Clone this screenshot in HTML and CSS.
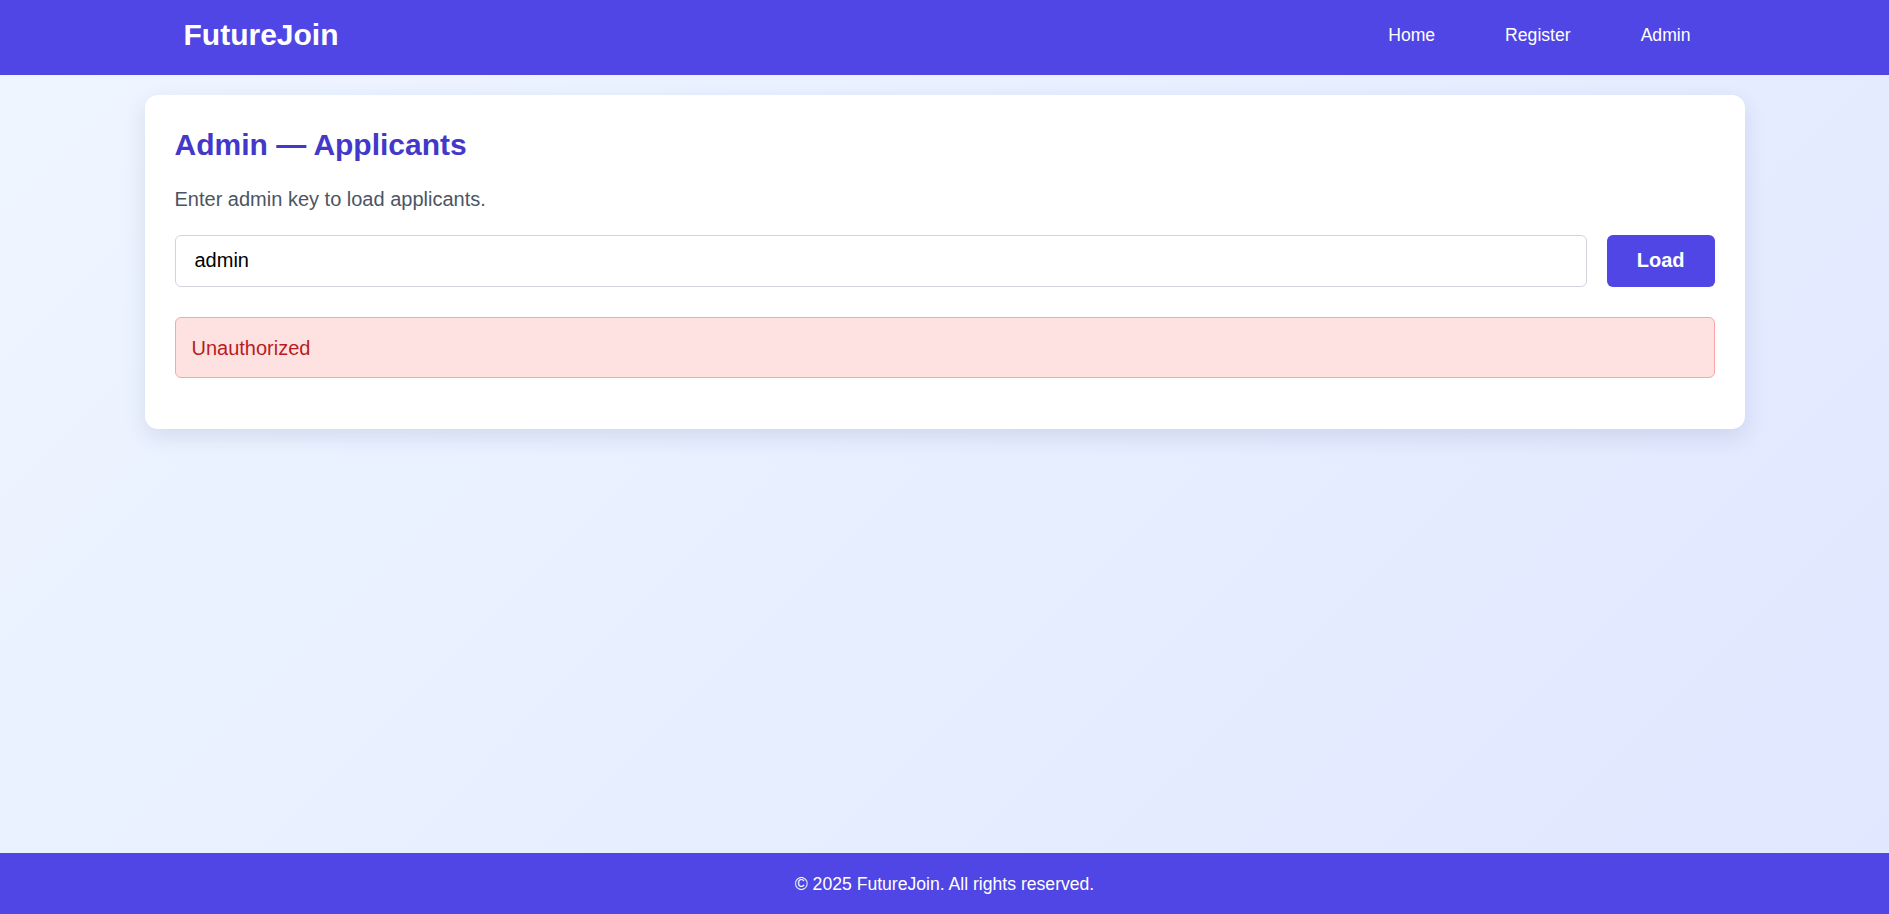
FILE: index.html
```html
<!DOCTYPE html>
<html lang="en">
<head>
<meta charset="utf-8">
<title>FutureJoin — Admin</title>
<link rel="stylesheet" href="styles.css">
</head>
<body>
<header class="site-header">
  <div class="header-inner">
    <div class="logo">FutureJoin</div>
    <nav class="nav">
      <a class="nav-link" href="#">Home</a>
      <a class="nav-link" href="#">Register</a>
      <a class="nav-link" href="#">Admin</a>
    </nav>
  </div>
</header>
<main class="main">
  <section class="card">
    <h2 class="card-title">Admin — Applicants</h2>
    <p class="card-sub">Enter admin key to load applicants.</p>
    <div class="key-row">
      <input class="key-input" type="text" value="admin">
      <button class="load-btn" type="button">Load</button>
    </div>
    <div class="error-box">Unauthorized</div>
  </section>
</main>
<footer class="site-footer">© 2025 FutureJoin. All rights reserved.</footer>
</body>
</html>
```
FILE: styles.css
```css
* { box-sizing: border-box; }
html, body { height: 100%; }
body {
  margin: 0;
  min-height: 100vh;
  display: flex;
  flex-direction: column;
  font-family: "Liberation Sans", Arial, sans-serif;
  background: linear-gradient(135deg, #eff6ff 0%, #e0e7ff 100%);
  color: #111827;
}
.site-header {
  background: #4f46e5;
  color: #fff;
  height: 75px;
  padding-top: 18px;
}
.header-inner {
  max-width: 1600px;
  margin: 0 auto;
  padding: 0 40px 0 39px;
  display: flex;
  align-items: center;
  justify-content: space-between;
  height: 34px;
}
.logo {
  font-size: 30px;
  font-weight: 700;
  line-height: 34px;
}
.nav {
  display: flex;
  gap: 42px;
}
.nav-link {
  color: #fff;
  text-decoration: none;
  font-size: 17.6px;
  padding: 0 14px;
}
.main {
  flex: 1;
  width: 100%;
  max-width: 1600px;
  margin: 20px auto 0;
}
.card {
  background: #fff;
  border-radius: 13px;
  padding: 33px 30px 32px;
  box-shadow: 0 8px 22px rgba(40, 50, 110, 0.12);
}
.card-title {
  margin: 0 0 26px;
  font-size: 30px;
  line-height: 34px;
  font-weight: 700;
  color: #4338ca;
}
.card-sub {
  margin: 0 0 23.5px;
  font-size: 20px;
  line-height: 23px;
  color: #4b5563;
}
.key-row {
  display: flex;
  gap: 20px;
}
.key-input {
  flex: 1;
  height: 52px;
  padding: 0 19px;
  font-family: "Liberation Sans", Arial, sans-serif;
  font-size: 20px;
  color: #000;
  border: 1px solid #d1d5db;
  border-radius: 6px;
  background: #fff;
  outline: none;
}
.load-btn {
  height: 52px;
  padding: 0 30px;
  border: none;
  border-radius: 6px;
  background: #4f46e5;
  color: #fff;
  font-family: "Liberation Sans", Arial, sans-serif;
  font-size: 20px;
  font-weight: 700;
}
.error-box {
  margin: 30px 0 19px;
  padding: 19px 16px 17px;
  font-size: 20px;
  line-height: 23px;
  color: #b91c1c;
  background: #fee2e2;
  border: 1px solid #fca5a5;
  border-radius: 6px;
}
.site-footer {
  background: #4f46e5;
  color: #fff;
  text-align: center;
  font-size: 17.6px;
  line-height: 21px;
  padding: 21px 0 19px;
}
```
